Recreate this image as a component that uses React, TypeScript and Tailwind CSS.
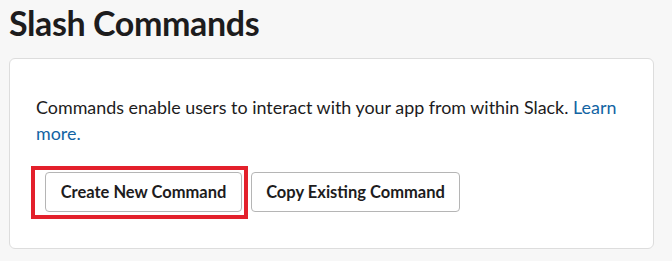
export default function App() {
  return (
    <div className="w-[672px] h-[261px] overflow-hidden bg-[#f7f7f7] font-['Lato',sans-serif] text-[#1d1c1d]">
      <div className="pl-[9px] pr-[18px] pt-[1px]">
        {/* Page title */}
        <h1 className="text-[34px] leading-[44px] font-bold tracking-[-0.4px]">Slash Commands</h1>

        {/* Card */}
        <div className="mt-[13px] h-[191px] rounded-[6px] border border-[#dddddd] bg-white pl-[26px] pr-[30px] pt-[35px]">
          <p className="text-[17.9px] leading-[26px]">
            Commands enable users to interact with your app from within Slack.{' '}
            <a className="text-[#1264a3]">Learn more.</a>
          </p>

          <div className="mt-[26px] ml-[9px] flex gap-[9px]">
            <div className="relative">
              <button className="h-[40px] w-[197px] rounded-[4px] border border-[#b5b5b5] bg-white text-[16.5px] font-bold">
                Create New Command
              </button>
              {/* Annotation outline */}
              <div className="pointer-events-none absolute left-[-14px] top-[-6px] h-[53px] w-[217px] border-4 border-[#e3202b]" />
            </div>
            <button className="h-[40px] w-[209px] rounded-[4px] border border-[#b5b5b5] bg-white text-[16.5px] font-bold">
              Copy Existing Command
            </button>
          </div>
        </div>
      </div>
    </div>
  );
}
